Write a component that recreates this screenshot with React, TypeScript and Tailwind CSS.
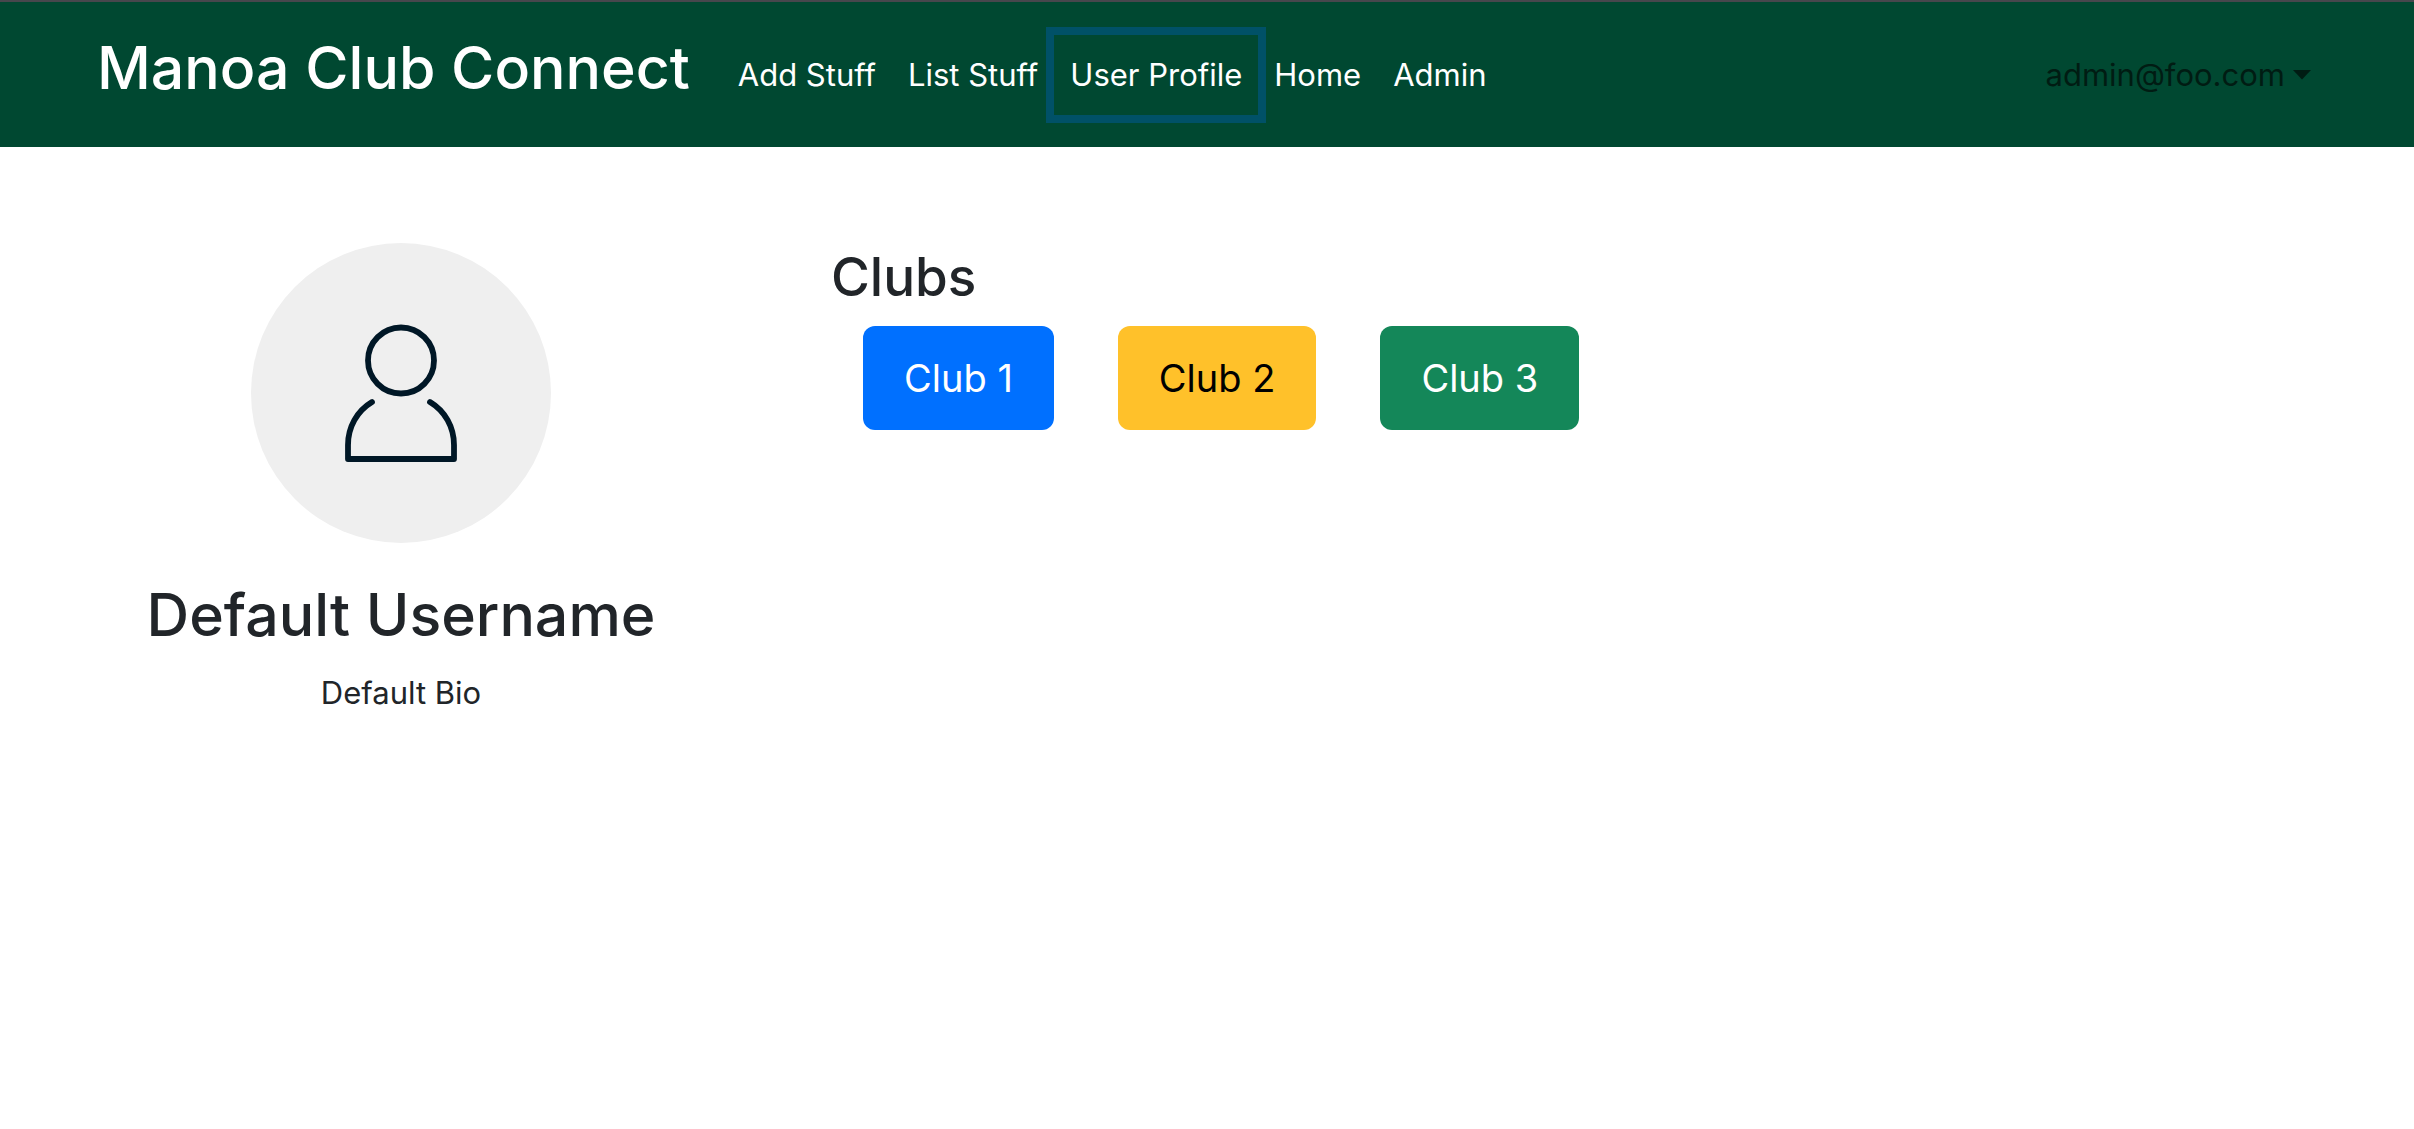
const links = [
  { label: 'Add Stuff' },
  { label: 'List Stuff' },
  { label: 'User Profile', focused: true },
  { label: 'Home' },
  { label: 'Admin' },
];

const clubs = [
  { name: 'Club 1', style: 'bg-[#0070ff] text-white' },
  { name: 'Club 2', style: 'bg-[#ffc12a] text-black' },
  { name: 'Club 3', style: 'bg-[#148759] text-white' },
];

function NavBar() {
  return (
    <header className="border-t-2 border-[#47474d] bg-[#004831]">
      <div className="mx-auto flex h-[145px] max-w-[2280px] items-center pr-9 pl-[30px]">
        <a href="#" className="mr-8 pb-3.5 text-[59px] leading-[90px] font-medium text-white">
          Manoa Club Connect
        </a>
        <nav className="flex flex-1 items-center text-[31px] leading-[48px] text-white">
          {links.map((link) => (
            <a
              key={link.label}
              href="#"
              className={
                link.focused
                  ? 'px-4 py-4 outline-8 outline-[#005167]'
                  : 'px-4 py-4'
              }
            >
              {link.label}
            </a>
          ))}
        </nav>
        <button className="flex items-center gap-2 text-[31px] leading-[48px] text-[#001c13]">
          admin@foo.com
          <svg width="18" height="10" viewBox="0 0 18 10" fill="currentColor" aria-hidden="true">
            <path d="M0 0h18L9 9.500z" />
          </svg>
        </button>
      </div>
    </header>
  );
}

function Avatar() {
  return (
    <svg width="300" height="300" viewBox="0 0 300 300" role="img" aria-label="Profile picture">
      <circle cx="150" cy="150" r="150" fill="#efefef" />
      <g fill="none" stroke="#001726" strokeWidth="5.800" strokeLinecap="round" strokeLinejoin="round">
        <circle cx="150" cy="117.500" r="33" />
        <path d="M121 159C106 168 97 184 97 202V216H203V202C203 184 194 168 179 159" />
      </g>
    </svg>
  );
}

export default function App() {
  return (
    <div className="min-h-screen bg-white font-['Inter',sans-serif] text-[#212529]">
      <NavBar />
      <main className="mx-auto flex max-w-[2280px] pt-24">
        <section className="flex w-[668px] flex-col items-center">
          <Avatar />
          <h1 className="mt-8 text-[59px] leading-[80px] font-medium">Default Username</h1>
          <p className="mt-3.5 text-[31px] leading-[48px]">Default Bio</p>
        </section>
        <section className="ml-24">
          <h2 className="text-[53px] leading-[68px] font-medium">Clubs</h2>
          <div className="mt-[15px] flex gap-16 pl-8">
            {clubs.map((club) => (
              <button
                key={club.name}
                className={`h-[104px] rounded-xl px-[41px] text-[38px] ${club.style}`}
              >
                {club.name}
              </button>
            ))}
          </div>
        </section>
      </main>
    </div>
  );
}
